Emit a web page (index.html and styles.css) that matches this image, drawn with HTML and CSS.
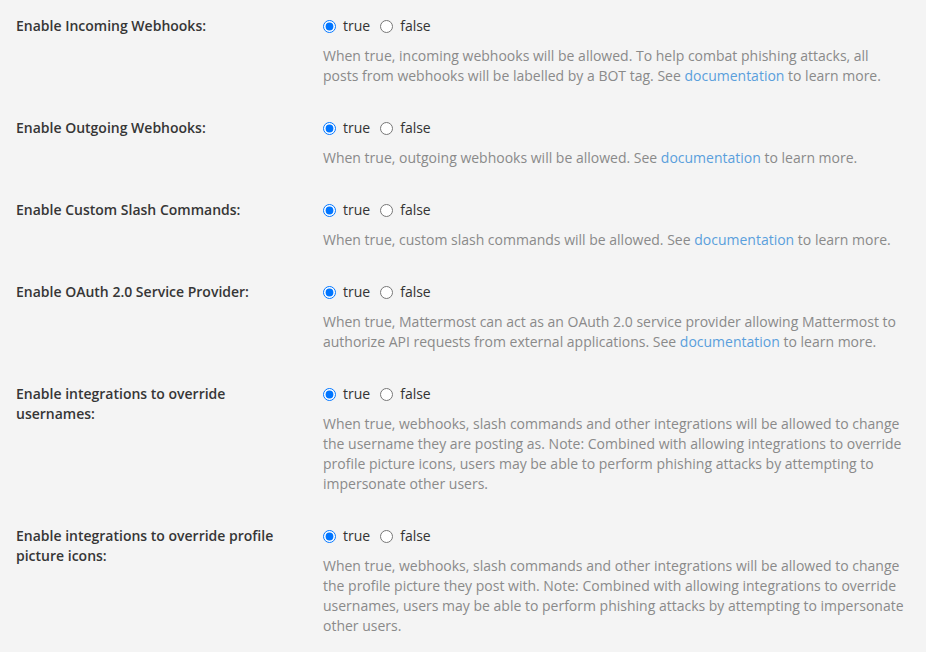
FILE: index.html
```html
<!DOCTYPE html>
<html>
<head>
<meta charset="utf-8">
<link rel="stylesheet" href="styles.css">
</head>
<body>
<div class="page">
  <div class="setting">
    <div class="label">Enable Incoming Webhooks:</div>
    <div class="control">
      <div class="radios">
        <label class="opt"><input type="radio" name="r1" checked><span>true</span></label>
        <label class="opt"><input type="radio" name="r1"><span>false</span></label>
      </div>
      <div class="help">When true, incoming webhooks will be allowed. To help combat phishing attacks, all posts from webhooks will be labelled by a BOT tag. See <a href="#">documentation</a> to learn more.</div>
    </div>
  </div>
  <div class="setting">
    <div class="label">Enable Outgoing Webhooks:</div>
    <div class="control">
      <div class="radios">
        <label class="opt"><input type="radio" name="r2" checked><span>true</span></label>
        <label class="opt"><input type="radio" name="r2"><span>false</span></label>
      </div>
      <div class="help">When true, outgoing webhooks will be allowed. See <a href="#">documentation</a> to learn more.</div>
    </div>
  </div>
  <div class="setting">
    <div class="label">Enable Custom Slash Commands:</div>
    <div class="control">
      <div class="radios">
        <label class="opt"><input type="radio" name="r3" checked><span>true</span></label>
        <label class="opt"><input type="radio" name="r3"><span>false</span></label>
      </div>
      <div class="help">When true, custom slash commands will be allowed. See <a href="#">documentation</a> to learn more.</div>
    </div>
  </div>
  <div class="setting">
    <div class="label">Enable OAuth 2.0 Service Provider:</div>
    <div class="control">
      <div class="radios">
        <label class="opt"><input type="radio" name="r4" checked><span>true</span></label>
        <label class="opt"><input type="radio" name="r4"><span>false</span></label>
      </div>
      <div class="help">When true, Mattermost can act as an OAuth 2.0 service provider allowing Mattermost to authorize API requests from external applications. See <a href="#">documentation</a> to learn more.</div>
    </div>
  </div>
  <div class="setting">
    <div class="label">Enable integrations to override usernames:</div>
    <div class="control">
      <div class="radios">
        <label class="opt"><input type="radio" name="r5" checked><span>true</span></label>
        <label class="opt"><input type="radio" name="r5"><span>false</span></label>
      </div>
      <div class="help">When true, webhooks, slash commands and other integrations will be allowed to change the username they are posting as. Note: Combined with allowing integrations to override profile picture icons, users may be able to perform phishing attacks by attempting to impersonate other users.</div>
    </div>
  </div>
  <div class="setting">
    <div class="label">Enable integrations to override profile picture icons:</div>
    <div class="control">
      <div class="radios">
        <label class="opt"><input type="radio" name="r6" checked><span>true</span></label>
        <label class="opt"><input type="radio" name="r6"><span>false</span></label>
      </div>
      <div class="help">When true, webhooks, slash commands and other integrations will be allowed to change the profile picture they post with. Note: Combined with allowing integrations to override usernames, users may be able to perform phishing attacks by attempting to impersonate other users.</div>
    </div>
  </div>
</div>
</body>
</html>
```

FILE: styles.css
```css
html, body {
  margin: 0;
  padding: 0;
  background: #f4f4f4;
}
body {
  font-family: "Open Sans", "Liberation Sans", sans-serif;
  font-size: 14px;
  line-height: 20px;
  color: #333333;
}
.page {
  padding: 16px 0 0 16px;
}
.setting {
  display: flex;
  gap: 30px;
  margin-bottom: 32px;
}
.label {
  flex: 0 0 277px;
  font-weight: 600;
  color: #363636;
}
.control {
  flex: 0 0 584px;
}
.radios {
  display: flex;
  align-items: center;
  height: 20px;
}
.opt {
  display: flex;
  align-items: center;
  margin-right: 10px;
  cursor: pointer;
}
.opt input {
  width: 13px;
  height: 13px;
  margin: 0 7px 0 0;
}
.opt span {
  color: #333333;
}
.help {
  margin-top: 10px;
  color: #8a8a8a;
}
.help a {
  color: #5a9fdc;
  text-decoration: none;
}
```
